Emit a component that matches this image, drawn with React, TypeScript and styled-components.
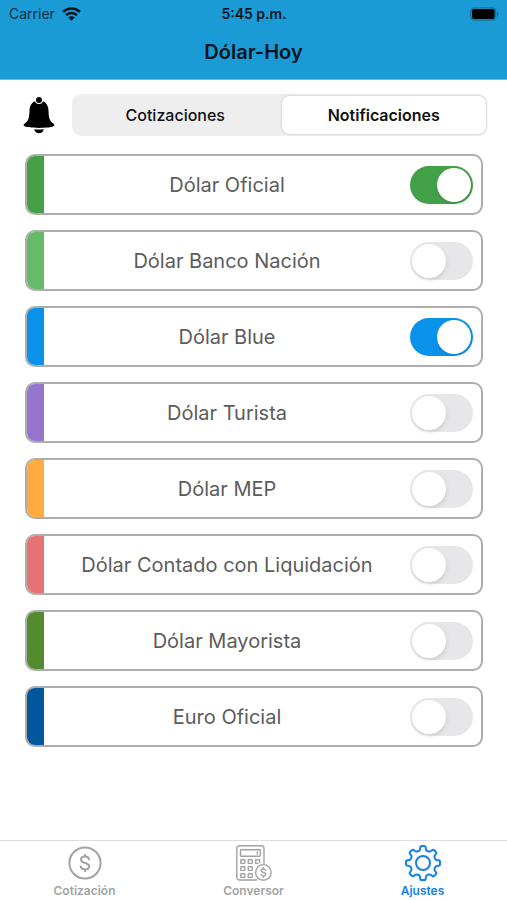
import React, { useState } from "react";
import styled, { createGlobalStyle } from "styled-components";

const GlobalStyle = createGlobalStyle`
  *, *::before, *::after { box-sizing: border-box; }
  body {
    margin: 0;
    background: #fff;
    color: #000;
    font-family: Inter, "Liberation Sans", sans-serif;
  }
  button, input { font: inherit; margin: 0; }
`;

const Screen = styled.div`
  display: flex;
  flex-direction: column;
  min-height: 100vh;
`;

const Header = styled.header`
  background: #1a9bd5;
  border-bottom: 1px solid #66bce3;
  color: #06131c;
`;

const StatusBar = styled.div`
  display: grid;
  grid-template-columns: 1fr auto 1fr;
  align-items: center;
  height: 27px;
  padding: 0 8px 0 9px;
  font-size: 14px;
  line-height: 16px;
`;

const Carrier = styled.div`
  display: flex;
  align-items: center;
  gap: 7px;
  color: #0b2f42;
`;

const Clock = styled.time`
  font-weight: 600;
`;

const Battery = styled.div`
  display: flex;
  justify-content: flex-end;
`;

const Title = styled.h1`
  margin: 0;
  height: 52px;
  font-size: 20px;
  font-weight: 600;
  line-height: 50px;
  text-align: center;
`;

const Main = styled.main`
  flex: 1;
  padding: 14px 20px 24px;
`;

const Toolbar = styled.div`
  display: flex;
  align-items: center;
  gap: 16px;
`;

const BellButton = styled.button`
  display: flex;
  padding: 0 0 0 2px;
  border: 0;
  background: none;
`;

const Segments = styled.div`
  display: grid;
  grid-template-columns: 1fr 1fr;
  gap: 4px;
  flex: 1;
  height: 42px;
  padding: 2px 1px;
  border-radius: 9px;
  background: #eee;
`;

const Segment = styled.button<{ $active: boolean }>`
  border: 0;
  border-radius: 8px;
  padding: 0;
  color: #111;
  font-size: 16px;
  font-weight: ${(p) => (p.$active ? 600 : 500)};
  background: ${(p) => (p.$active ? "#fff" : "transparent")};
  box-shadow: ${(p) => (p.$active ? "0 0 3px rgba(0, 0, 0, 0.16)" : "none")};
`;

const List = styled.ul`
  display: flex;
  flex-direction: column;
  gap: 15px;
  margin: 18px 4px 0 5px;
  padding: 0;
  list-style: none;
`;

const Row = styled.li`
  height: 61px;
  border: 2px solid #adadad;
  border-radius: 10px;
  overflow: hidden;
`;

const RowLabel = styled.label`
  display: flex;
  align-items: center;
  height: 100%;
  padding-right: 8px;
`;

const Stripe = styled.span<{ $color: string }>`
  align-self: stretch;
  width: 17px;
  background: ${(p) => p.$color};
`;

const Name = styled.span`
  flex: 1;
  color: #5c5c5c;
  font-size: 20px;
  line-height: 24px;
  text-align: center;
`;

const Switch = styled.input<{ $color: string }>`
  appearance: none;
  display: flex;
  align-items: center;
  width: 63px;
  height: 38px;
  padding: 2px;
  border-radius: 19px;
  background: #e7e7e9;

  &::before {
    content: "";
    width: 34px;
    height: 34px;
    border-radius: 50%;
    background: #fff;
    box-shadow: 1px 2px 4px rgba(0, 0, 0, 0.1);
  }

  &:checked {
    justify-content: flex-end;
    background: ${(p) => p.$color};
  }
`;

const TabBar = styled.nav`
  display: grid;
  grid-template-columns: repeat(3, 1fr);
  height: 60px;
  border-top: 1px solid #dedede;
`;

const Tab = styled.a<{ $active?: boolean }>`
  display: flex;
  flex-direction: column;
  align-items: center;
  gap: 2px;
  padding-top: 4px;
  color: ${(p) => (p.$active ? "#1480ea" : "#a3a3a3")};
  font-size: 12px;
  font-weight: 600;
  line-height: 16px;
  text-decoration: none;
`;

function WifiIcon() {
  return (
    <svg width="19" height="14" viewBox="0 0 19 14" fill="none" stroke="#04121a" strokeWidth="2.5" aria-hidden="true">
      <path d="M1 4.9a12.2 12.2 0 0 1 17 0" />
      <path d="M4 8.1a8 8 0 0 1 11 0" />
      <path d="M9.5 13.8 6.3 10.6a4.6 4.6 0 0 1 6.4 0Z" fill="#04121a" stroke="none" />
    </svg>
  );
}

function BatteryIcon() {
  return (
    <svg width="29" height="14" viewBox="0 0 29 14" aria-label="Batería" role="img">
      <rect x="0.8" y="0.8" width="25" height="12.4" rx="3.6" fill="none" stroke="#126f9a" strokeWidth="1.2" />
      <rect x="2" y="2.1" width="22.6" height="9.8" rx="2.2" fill="#000" />
      <path d="M27 5v4.200q1.500-.8 1.500-2.100T27 5Z" fill="#126f9a" />
    </svg>
  );
}

function BellIcon() {
  return (
    <svg width="34" height="38" viewBox="0 0 34 38" aria-hidden="true">
      <path d="M17 4.500c6 0 9.300 4 9.500 10 .2 8 1.300 10.500 4.500 12.800 1.300 1 1.700 1.600 1.300 2.300C31.200 31.400 24 32 17 32S2.800 31.400 1.700 29.600c-.4-.7 0-1.300 1.300-2.300 3.200-2.300 4.300-4.800 4.500-12.800.2-6 3.500-10 9.500-10Z" />
      <circle cx="17" cy="4" r="3.500" stroke="#fff" strokeWidth="1.100" />
      <path d="M12.200 33.200q4.800.5 9.600 0C21.200 36 19.400 37.300 17 37.300S12.800 36 12.200 33.200Z" />
    </svg>
  );
}

function CoinIcon() {
  return (
    <svg width="36" height="36" viewBox="0 0 36 36" fill="none" stroke="currentColor" strokeWidth="2" strokeLinecap="round" aria-hidden="true">
      <circle cx="18" cy="18" r="15.600" />
      <path d="M22 14.200c-.4-1.600-2-2.600-4-2.600-2.300 0-4 1.200-4 3.100 0 4.300 8.100 2.200 8.100 6.500 0 2-1.800 3.200-4.100 3.200-2.200 0-3.900-1.100-4.200-2.900M18 9.800v1.800M18 24.400v1.800" />
    </svg>
  );
}

function CalculatorIcon() {
  return (
    <svg width="36" height="36" viewBox="0 0 36 36" fill="none" stroke="currentColor" strokeWidth="1.400" strokeLinecap="round" strokeLinejoin="round" aria-hidden="true">
      <path d="M20.500 35H3.500A2.700 2.700 0 0 1 .8 32.300V3.500A2.700 2.700 0 0 1 3.500.8h21.800A2.700 2.700 0 0 1 28 3.500v15" />
      <rect x="4.500" y="4.800" width="19.800" height="6.400" rx="0.600" />
      <path d="M21.300 7v2" />
      <rect x="4.800" y="14.800" width="4" height="3.600" rx="0.500" />
      <rect x="12.200" y="14.800" width="4" height="3.600" rx="0.500" />
      <path d="M22 18.400h-1.900a.5.500 0 0 1-.5-.5v-2.600a.5.500 0 0 1 .5-.5h3a.5.500 0 0 1 .5.500v2" />
      <rect x="4.800" y="21.800" width="4" height="3.600" rx="0.500" />
      <rect x="12.200" y="21.800" width="4" height="3.600" rx="0.500" />
      <rect x="4.800" y="28.800" width="4" height="3.600" rx="0.500" />
      <rect x="12.200" y="28.800" width="4" height="3.600" rx="0.500" />
      <circle cx="27.400" cy="27.400" r="7.800" />
      <path d="M29.600 25.400c-.3-.9-1.100-1.400-2.200-1.400-1.300 0-2.200.7-2.200 1.700 0 2.300 4.500 1.200 4.500 3.500 0 1.100-1 1.700-2.300 1.700-1.200 0-2.100-.6-2.300-1.500M27.400 22.700v1.300M27.400 30.900v1.300" />
    </svg>
  );
}

type Point = [number, number];

// Moves from one point towards another by at most the given distance, never past the middle.
function towards(from: Point, to: Point, distance: number): string {
  const length = Math.hypot(to[0] - from[0], to[1] - from[1]);
  const t = Math.min(distance / length, 0.5);
  return `${(from[0] + (to[0] - from[0]) * t).toFixed(2)} ${(from[1] + (to[1] - from[1]) * t).toFixed(2)}`;
}

// Builds an eight-tooth gear outline with rounded corners.
function gearOutline(center: number, outer: number, inner: number) {
  const points: Point[] = [];
  for (let tooth = 0; tooth < 8; tooth++) {
    const corners: Point[] = [[-12, inner], [-9, outer], [9, outer], [12, inner]];
    for (const [offset, radius] of corners) {
      const angle = ((tooth * 45 + offset - 90) * Math.PI) / 180;
      points.push([center + radius * Math.cos(angle), center + radius * Math.sin(angle)]);
    }
  }
  const count = points.length;
  let path = "";
  points.forEach((p, i) => {
    const before = points[(i + count - 1) % count];
    const after = points[(i + 1) % count];
    const reach = i % 4 === 0 || i % 4 === 3 ? 3 : 1.6;
    path += `${i === 0 ? "M" : "L"}${towards(p, before, reach)}`;
    path += `Q${p[0].toFixed(2)} ${p[1].toFixed(2)} ${towards(p, after, reach)}`;
  });
  return `${path}Z`;
}

const GEAR = gearOutline(18, 17.200, 12.900);

function GearIcon() {
  return (
    <svg width="36" height="36" viewBox="0 0 36 36" fill="none" stroke="currentColor" strokeWidth="2" strokeLinejoin="round" aria-hidden="true">
      <path d={GEAR} />
      <circle cx="18" cy="18" r="7" />
    </svg>
  );
}

const RATES = [
  { name: "Dólar Oficial", color: "#43a047", on: true },
  { name: "Dólar Banco Nación", color: "#66bb6a", on: false },
  { name: "Dólar Blue", color: "#0a92eb", on: true },
  { name: "Dólar Turista", color: "#9575cd", on: false },
  { name: "Dólar MEP", color: "#ffab40", on: false },
  { name: "Dólar Contado con Liquidación", color: "#e57373", on: false },
  { name: "Dólar Mayorista", color: "#558b2f", on: false },
  { name: "Euro Oficial", color: "#01579b", on: false },
];

export default function App() {
  const [segment, setSegment] = useState("Notificaciones");
  const [enabled, setEnabled] = useState(RATES.map((rate) => rate.on));

  const toggle = (index: number) =>
    setEnabled((values) => values.map((value, i) => (i === index ? !value : value)));

  return (
    <Screen>
      <GlobalStyle />
      <Header>
        <StatusBar>
          <Carrier>
            Carrier
            <WifiIcon />
          </Carrier>
          <Clock>5:45 p.m.</Clock>
          <Battery>
            <BatteryIcon />
          </Battery>
        </StatusBar>
        <Title>Dólar-Hoy</Title>
      </Header>
      <Main>
        <Toolbar>
          <BellButton type="button" aria-label="Notificaciones">
            <BellIcon />
          </BellButton>
          <Segments>
            {["Cotizaciones", "Notificaciones"].map((label) => (
              <Segment
                key={label}
                type="button"
                $active={segment === label}
                aria-pressed={segment === label}
                onClick={() => setSegment(label)}
              >
                {label}
              </Segment>
            ))}
          </Segments>
        </Toolbar>
        <List>
          {RATES.map((rate, index) => (
            <Row key={rate.name}>
              <RowLabel>
                <Stripe $color={rate.color} />
                <Name>{rate.name}</Name>
                <Switch
                  type="checkbox"
                  role="switch"
                  $color={rate.color}
                  checked={enabled[index]}
                  onChange={() => toggle(index)}
                />
              </RowLabel>
            </Row>
          ))}
        </List>
      </Main>
      <TabBar>
        <Tab href="#cotizacion">
          <CoinIcon />
          Cotización
        </Tab>
        <Tab href="#conversor">
          <CalculatorIcon />
          Conversor
        </Tab>
        <Tab href="#ajustes" $active aria-current="page">
          <GearIcon />
          Ajustes
        </Tab>
      </TabBar>
    </Screen>
  );
}
